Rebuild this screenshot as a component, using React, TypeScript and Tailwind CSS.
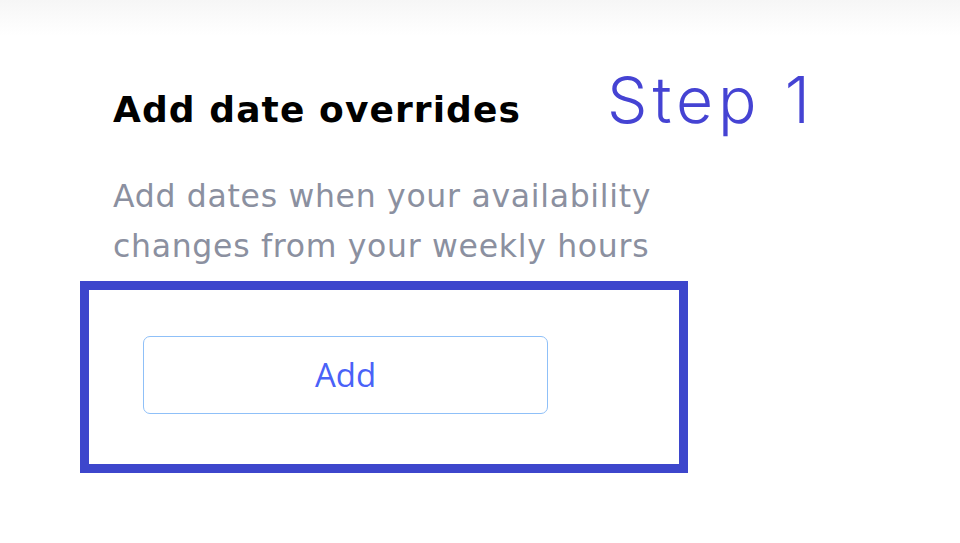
import React from 'react';

export default function App() {
  return (
    <div className="w-[960px] h-[543px] bg-white overflow-hidden font-['DejaVu_Sans','Noto_Sans',sans-serif]">
      <div className="h-[36px] bg-gradient-to-b from-[#f6f6f6] to-white" />

      <div className="pl-[80px]">
        <div className="flex items-end pl-[33px] h-[100px]">
          <h2 className="w-[494px] text-[36px] leading-[40px] font-bold text-black tracking-[1.1px] pb-[6px]">
            Add date overrides
          </h2>
          <span className="font-['Inter',sans-serif] text-[64px] leading-[70px] font-light text-[#4543d3] tracking-[5px] pb-[1px]">
            Step 1
          </span>
        </div>

        <p className="pl-[33px] mt-[35px] text-[31.5px] leading-[50px] text-[#8b90a0] tracking-[0.7px]">
          Add dates when your availability
          <br />
          changes from your weekly hours
        </p>

        <div className="mt-[10px] w-[608px] h-[192px] border-[9px] border-[#3d46cc] pt-[46px] pl-[54px]">
          <button className="w-[405px] h-[78px] rounded-[7px] border-[1.5px] border-[#8fc0f8] text-[#4a62f8] text-[33px] font-['Open_Sans',sans-serif]">
            Add
          </button>
        </div>
      </div>
    </div>
  );
}
